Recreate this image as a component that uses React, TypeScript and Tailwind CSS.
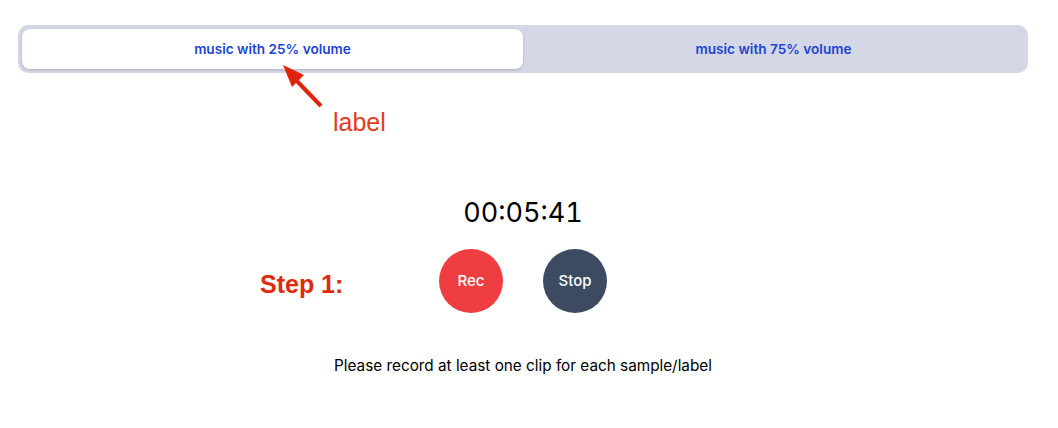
import React, { useState } from "react";

const tabs = ["music with 25% volume", "music with 75% volume"];

export default function App() {
  const [active, setActive] = useState(0);

  return (
    <div className="relative w-[1058px] h-[428px] bg-white font-['Inter',sans-serif] text-black">
      <div className="ml-[18px] w-[1010px] pt-[25px]">
        <div className="flex h-12 rounded-[10px] bg-[#d4d7e5] p-1">
          {tabs.map((t, i) => (
            <button
              key={t}
              onClick={() => setActive(i)}
              className={
                i === active
                  ? "flex-1 rounded-lg bg-white pt-px text-[13.6px] font-semibold text-[#1d44d4] shadow-[0_1px_3px_rgba(0,0,0,0.18)]"
                  : "flex-1 rounded-lg pt-px text-[13.6px] font-semibold text-[#1d44d4]"
              }
            >
              {t}
            </button>
          ))}
        </div>

        <div className="mt-[119px] flex flex-col items-center">
          <div className="text-[27px] leading-[42px] tabular-nums">00:05:41</div>
          <div className="mt-[15px] flex gap-10">
            <button className="flex h-16 w-16 items-center justify-center rounded-full bg-[#ef3e42] text-[15px] font-medium text-white">
              Rec
            </button>
            <button className="flex h-16 w-16 items-center justify-center rounded-full bg-[#3c4b61] text-[15px] font-medium text-white">
              Stop
            </button>
          </div>
          <p className="mt-[41px] text-[15.3px] leading-6">
            Please record at least one clip for each sample/label
          </p>
        </div>
      </div>

      {/* annotations */}
      <svg className="absolute left-0 top-0" width="1058" height="428">
        <line x1="321" y1="106" x2="293" y2="77" stroke="#e0240c" strokeWidth="4" />
        <polygon points="283,65 304,75 292,87" fill="#e0240c" />
      </svg>
      <span className="absolute left-[333px] top-[106px] font-['Liberation_Sans',sans-serif] text-[25px] leading-8 text-[#e23a22]">
        label
      </span>
      <span className="absolute left-[260px] top-[268px] font-['Liberation_Sans',sans-serif] text-[25px] font-bold leading-8 text-[#e02a10]">
        Step 1:
      </span>
    </div>
  );
}
